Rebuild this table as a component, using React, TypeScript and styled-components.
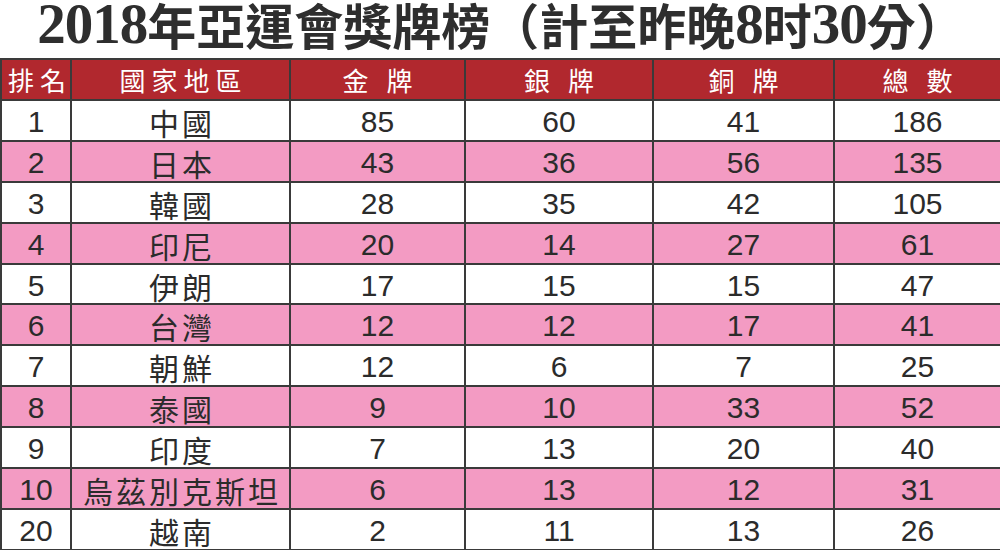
import React from "react";
import styled, { createGlobalStyle } from "styled-components";

interface MedalRow {
  rank: number;
  name: string;
  gold: number;
  silver: number;
  bronze: number;
  total: number;
}

const rows: MedalRow[] = [
  { rank: 1, name: "中國", gold: 85, silver: 60, bronze: 41, total: 186 },
  { rank: 2, name: "日本", gold: 43, silver: 36, bronze: 56, total: 135 },
  { rank: 3, name: "韓國", gold: 28, silver: 35, bronze: 42, total: 105 },
  { rank: 4, name: "印尼", gold: 20, silver: 14, bronze: 27, total: 61 },
  { rank: 5, name: "伊朗", gold: 17, silver: 15, bronze: 15, total: 47 },
  { rank: 6, name: "台灣", gold: 12, silver: 12, bronze: 17, total: 41 },
  { rank: 7, name: "朝鮮", gold: 12, silver: 6, bronze: 7, total: 25 },
  { rank: 8, name: "泰國", gold: 9, silver: 10, bronze: 33, total: 52 },
  { rank: 9, name: "印度", gold: 7, silver: 13, bronze: 20, total: 40 },
  { rank: 10, name: "烏茲別克斯坦", gold: 6, silver: 13, bronze: 12, total: 31 },
  { rank: 20, name: "越南", gold: 2, silver: 11, bronze: 13, total: 26 },
];

const headers = ["排名", "國家地區", "金 牌", "銀 牌", "銅 牌", "總 數"];
const widths = [70, 219, 175, 188, 181, 167];

const GlobalStyle = createGlobalStyle`
  html, body {
    margin: 0;
    padding: 0;
    background: #ffffff;
  }
`;

const Page = styled.div`
  width: 1000px;
  height: 550px;
  overflow: hidden;
  display: flex;
  flex-direction: column;
`;

const Title = styled.h1`
  box-sizing: border-box;
  margin: 0;
  height: 58px;
  padding: 0 0 10px 2px;
  flex-shrink: 0;
  display: flex;
  align-items: center;
  justify-content: center;
  font-family: "Noto Sans CJK TC", sans-serif;
  font-weight: 700;
  font-size: 49px;
  color: #2e2e2e;
  line-height: 48px;
  white-space: pre;
`;

// digits in the title are set a bit larger, in a serif face
const TitleNum = styled.span`
  font-family: "Liberation Serif", serif;
  font-size: 57px;
  font-weight: 700;
  letter-spacing: -1px;
  line-height: 48px;
`;

const Table = styled.table`
  width: 1000px;
  border-collapse: collapse;
  table-layout: fixed;
`;

const HeadRow = styled.tr`
  height: 41px;
`;

const HeadCell = styled.th`
  padding: 0;
  background: #b1282e;
  color: #ffffff;
  border: 2px solid #3a3a3a;
  font-family: "Noto Sans CJK TC", sans-serif;
  font-weight: 400;
  font-size: 26px;
  line-height: 1;
  letter-spacing: 6px;
  text-indent: 6px;
  text-align: center;
  white-space: pre;
`;

const Row = styled.tr<{ $pink: boolean }>`
  height: 40.9px;
  background: ${(p) => (p.$pink ? "#f39bc3" : "#ffffff")};
`;

const Cell = styled.td<{ $cjk?: boolean }>`
  padding: 3px 0 0;
  border: 2px solid #3a3a3a;
  text-align: center;
  vertical-align: middle;
  color: #2b2b2b;
  font-family: ${(p) =>
    p.$cjk
      ? `"Noto Sans CJK TC", sans-serif`
      : `"Liberation Sans", Arial, sans-serif`};
  font-size: 30px;
  letter-spacing: ${(p) => (p.$cjk ? "3px" : "0")};
  text-indent: ${(p) => (p.$cjk ? "3px" : "0")};
  line-height: 30px;
  white-space: nowrap;
`;

const App: React.FC = () => (
  <Page>
    <GlobalStyle />
    <Title>
      <TitleNum>2018</TitleNum>年亞運會獎牌榜（計至昨晚<TitleNum>8</TitleNum>时
      <TitleNum>30</TitleNum>分）
    </Title>
    <Table>
      <colgroup>
        {widths.map((w, i) => (
          <col key={i} style={{ width: w }} />
        ))}
      </colgroup>
      <thead>
        <HeadRow>
          {headers.map((h) => (
            <HeadCell key={h}>{h}</HeadCell>
          ))}
        </HeadRow>
      </thead>
      <tbody>
        {rows.map((r, i) => (
          <Row key={r.rank} $pink={i % 2 === 1}>
            <Cell>{r.rank}</Cell>
            <Cell $cjk>{r.name}</Cell>
            <Cell>{r.gold}</Cell>
            <Cell>{r.silver}</Cell>
            <Cell>{r.bronze}</Cell>
            <Cell>{r.total}</Cell>
          </Row>
        ))}
      </tbody>
    </Table>
  </Page>
);

export default App;
